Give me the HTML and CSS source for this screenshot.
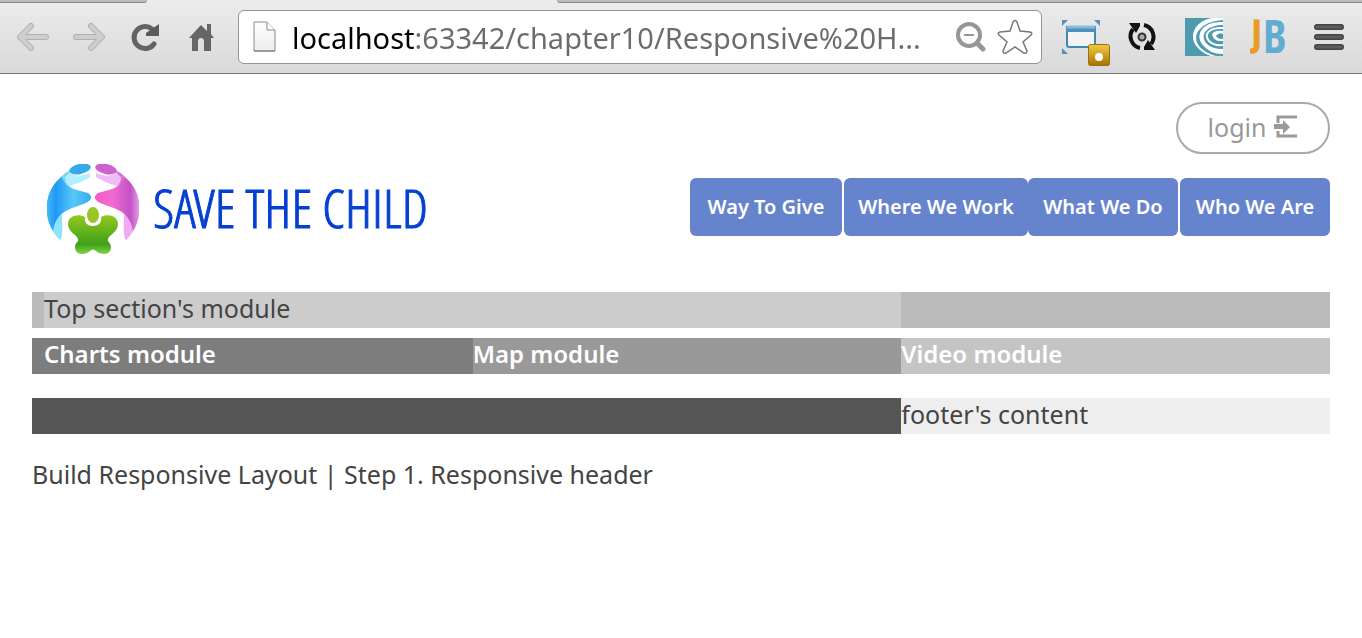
FILE: index.html
```html
<!DOCTYPE html>
<html lang="en">
<head>
<meta charset="utf-8">
<title>Save The Child</title>
<link rel="stylesheet" href="styles.css">
</head>
<body>
<div class="browser">
  <div class="tabs"><span class="tab-left"></span><span class="tab-active"></span><span class="tab-right"></span></div>
  <div class="toolbar">
    <div class="nav-tools">
      <button class="tool" aria-label="Back"><svg width="34" height="34" viewBox="0 0 34 34"><path d="M30 17H5M15 6L4 17L15 28" fill="none" stroke="#b0b0b0" stroke-width="6" stroke-linecap="round" stroke-linejoin="round"/><path d="M30 17H5M15 6L4 17L15 28" fill="none" stroke="#cecece" stroke-width="4" stroke-linecap="round" stroke-linejoin="round"/></svg></button>
      <button class="tool" aria-label="Forward"><svg width="34" height="34" viewBox="0 0 34 34"><path d="M4 17H29M19 6L30 17L19 28" fill="none" stroke="#b0b0b0" stroke-width="6" stroke-linecap="round" stroke-linejoin="round"/><path d="M4 17H29M19 6L30 17L19 28" fill="none" stroke="#cecece" stroke-width="4" stroke-linecap="round" stroke-linejoin="round"/></svg></button>
      <button class="tool" aria-label="Reload"><svg width="34" height="34" viewBox="0 0 34 34"><path d="M26 24A11 11 0 1 1 24 9" fill="none" stroke="#636363" stroke-width="5" stroke-linecap="round"/><path d="M31 4V16H18V13Z" fill="#5c5c5c"/></svg></button>
      <button class="tool" aria-label="Home"><svg width="34" height="34" viewBox="0 0 34 34"><path d="M5 18L17 5L23 11V4H27V14L30 18H27V31H20V22Q20 18 17 18T14 22V31H8V18Z" fill="#666"/></svg></button>
    </div>
    <div class="address">
      <svg class="page-icon" width="24" height="32" viewBox="0 0 24 32"><defs><linearGradient id="paper" x2="0" y2="1"><stop stop-color="#fff"/><stop offset="1" stop-color="#ececec"/></linearGradient></defs><path d="M1 1H14L22 9V30H1Z" fill="url(#paper)" stroke="#8a8a8a"/><path d="M14 1V9H22" fill="#fff" stroke="#8a8a8a"/><path d="M1 30H22" stroke="#777"/></svg>
      <input class="url" type="text" aria-label="Address" value="localhost:63342/chapter10/Responsive%20H...">
      <button class="tool" aria-label="Zoom"><svg width="32" height="32" viewBox="0 0 32 32" fill="none" stroke="#969696"><circle cx="14" cy="14" r="11" stroke-width="4"/><path d="M22 22L28 28" stroke-width="5" stroke-linecap="round"/><path d="M9 14H19" stroke-width="2"/></svg></button>
      <button class="tool" aria-label="Bookmark"><svg width="36" height="36" viewBox="0 0 36 36"><path d="M16 3Q18 0 20 3L23 12L33 13Q36 14 34 16L26 23L30 32Q30 35 27 34L18 28L9 34Q6 35 6 32L10 23L2 16Q0 14 3 13L13 12Z" fill="#fff" stroke="#777" stroke-width="1.5"/></svg></button>
    </div>
    <div class="extensions">
      <button class="tool resizer" aria-label="Window resizer"><svg width="50" height="58" viewBox="0 0 50 58"><defs><linearGradient id="gold" x2="0" y2="1"><stop stop-color="#f3cb43"/><stop offset="1" stop-color="#a77300"/></linearGradient></defs><path d="M1 12H7L1 18ZM39 12H33L39 18ZM1 46H7L1 40Z" fill="#4f94bd"/><rect x="6" y="19" width="28" height="20" rx="2" fill="#f4f4f4" stroke="#4188b5" stroke-width="2"/><path d="M5 18H35V24H5Z" fill="#4b91bd"/><path d="M6 19H34" stroke="#8bbbd8" stroke-width="3"/><rect x="27.500" y="36.500" width="21" height="21" rx="2" fill="url(#gold)" stroke="#967018"/><circle cx="38" cy="49" r="4" fill="#fff"/></svg></button>
      <button class="tool" aria-label="Auto refresh"><svg width="32" height="32" viewBox="0 0 32 32"><path d="M14 27A12 12 0 0 1 7 8M18 4A12 12 0 0 1 25 23" fill="none" stroke="#111" stroke-width="4"/><path d="M3 2H14V5L10 12ZM29 29H18V26L22 19Z" fill="#111"/><circle cx="16" cy="16" r="3.500" fill="#aaa" stroke="#333" stroke-width="2"/></svg></button>
      <button class="tool" aria-label="Swirl"><svg width="38" height="38" viewBox="0 0 38 38"><path d="M0 0H38V38H0Z" fill="#4c9bae"/><path d="M38 0H27C9 3 2 20 14 31Q19 36 26 38H31C13 33 7 21 14 12Q21 3 38 2Z" fill="#fff"/><path d="M38 4C18 3 10 16 17 26Q24 36 38 36V31Q26 31 21 25C14 15 24 7 38 7Z" fill="#fff"/><path d="M38 10C23 9 19 17 24 23Q29 28 38 27" fill="none" stroke="#fff" stroke-width="2"/><path d="M38 13Q30 12 27 16Q30 18 32 17Q35 14 38 16ZM27 16Q28 24 38 23V21Q31 21 31 17Z" fill="#fff"/></svg></button>
      <button class="tool" aria-label="JB"><svg width="36" height="66" viewBox="0 -14 36 66"><text class="jb j" x="2" y="28">J</text><text class="jb b" x="13" y="35">B</text></svg></button>
      <button class="tool" aria-label="Menu"><svg width="32" height="28" viewBox="0 0 32 28"><path d="M4 4H28M4 14H28M4 24H28" stroke="#444" stroke-width="6" stroke-linecap="round"/><path d="M4 4H28M4 14H28M4 24H28" stroke="#5c5c5c" stroke-width="3" stroke-linecap="round"/></svg></button>
    </div>
  </div>
</div>
<div class="page">
  <header class="header">
    <div class="account"><button class="login">login <svg width="24" height="24" viewBox="0 0 24 24"><path d="M23 2H4V8M4 16V21H23" fill="none" stroke="#999" stroke-width="3"/><path d="M0 9H9V5L16 12L9 19V14H0Z" fill="#999"/></svg></button></div>
    <div class="masthead">
      <a class="brand" href="#">
        <svg width="92" height="92" viewBox="0 0 92 92" aria-hidden="true">
          <defs>
            <linearGradient id="blue"><stop stop-color="#46baf6"/><stop offset=".2" stop-color="#2099f7"/><stop offset=".6" stop-color="#55c9f6"/><stop offset="1" stop-color="#37aaf3"/></linearGradient>
            <linearGradient id="pink"><stop stop-color="#f25cc8"/><stop offset=".4" stop-color="#f26ad0"/><stop offset=".8" stop-color="#c352c5"/><stop offset="1" stop-color="#e49ce9"/></linearGradient>
            <linearGradient id="green" x2="0" y2="1"><stop stop-color="#94c81f"/><stop offset=".75" stop-color="#40a018"/><stop offset="1" stop-color="#7ed64b"/></linearGradient>
          </defs>
          <path d="M16 13L22 8Q31 15 43 9V13Q36 18 22 22Z" fill="#b2efff"/>
          <path d="M76 13L70 8Q61 15 49 9V13Q56 18 70 22Z" fill="#efbdf5"/>
          <path d="M12 15Q-4 30 1 54Q4 68 13 76Q16 75 15 52Z" fill="#8fe2fc"/>
          <path d="M80 15Q96 30 91 54Q88 68 79 76Q76 75 77 52Z" fill="#efacf1"/>
          <path d="M15 12Q-5 29 1 56Q3 63 6 67C10 42 31 45 42 37Q47 33 41 29C32 26 19 26 15 12Z" fill="url(#blue)"/>
          <path d="M77 12Q97 29 91 56Q89 63 86 67C82 42 61 45 50 37Q45 33 51 29C60 26 73 26 77 12Z" fill="url(#pink)"/>
          <path d="M15 12Q19 8 24 6Q22 10 18 13Q18 18 22 22Q16 19 15 12Z" fill="#72d4f8"/>
          <path d="M77 12Q73 8 68 6Q70 10 74 13Q74 18 70 22Q76 19 77 12Z" fill="#d66fd5"/>
          <ellipse cx="33" cy="5" rx="11" ry="5" transform="rotate(-12 33 5)" fill="#36a9eb"/>
          <ellipse cx="59" cy="5" rx="11" ry="5" transform="rotate(12 59 5)" fill="#d062d0"/>
          <path d="M38 53C37 59 41 62 46 62S55 59 54 53C61 49 71 52 71 60C71 68 62 71 61 75C60 79 64 77 64 84C63 92 53 91 49 87Q46 84 43 87C39 91 29 92 28 84C28 77 32 79 31 75C30 71 21 68 21 60C21 52 31 49 38 53Z" fill="url(#green)"/>
          <ellipse cx="46" cy="51" rx="7" ry="9" fill="#9ac522" stroke="#fff" stroke-width="2"/>
        </svg>
        <span class="wordmark">SAVE THE CHILD</span>
      </a>
      <nav class="menu"><a class="menu-link spaced" href="#">Way To Give</a><a class="menu-link" href="#">Where We Work</a><a class="menu-link spaced" href="#">What We Do</a><a class="menu-link" href="#">Who We Are</a></nav>
    </div>
  </header>
  <main>
    <section class="row top"><div class="top-module">Top section's module</div></section>
    <section class="row modules"><div class="charts">Charts module</div><div class="map">Map module</div><div class="video">Video module</div></section>
  </main>
  <footer>
    <div class="row foot"><div class="foot-content">footer's content</div></div>
    <p class="caption">Build Responsive Layout | Step 1. Responsive header</p>
  </footer>
</div>
</body>
</html>
```
FILE: styles.css
```css
* { box-sizing: border-box; }
body { margin: 0; background: #fff; color: #444; font-family: "Noto Sans", sans-serif; font-size: 25px; line-height: 32px; }
a { text-decoration: none; }
button { font: inherit; }
.browser { border-bottom: 1px solid #777; background: linear-gradient(#ececec, #d9d9d9); }
.tabs { display: flex; height: 3px; }
.tab-left { flex: 0 0 147px; background: #bbb; border-bottom: 1px solid #888; border-bottom-right-radius: 3px; }
.tab-active { flex: 0 0 410px; }
.tab-right { flex: 1; background: #bbb; border-bottom: 1px solid #888; border-bottom-left-radius: 3px; }
.toolbar { display: flex; align-items: center; height: 70px; padding: 0 17px 2px 16px; }
.tool { display: flex; padding: 0; border: 0; background: none; flex: none; }
.nav-tools { display: flex; gap: 22px; width: 222px; }
.address { display: flex; align-items: center; flex: 1; min-width: 0; height: 54px; padding: 0 8px 0 14px; border: 1px solid #949494; border-radius: 6px; background: #fff; }
.page-icon { flex: none; }
.url { flex: 1; min-width: 0; margin-left: 15px; padding: 0; border: 0; font: 29px "Noto Sans", sans-serif; color: transparent; background: linear-gradient(90deg, #000 122px, #6b6b6b 122px); background-clip: text; -webkit-background-clip: text; }
.address .tool { margin-left: 10px; }
.extensions { display: flex; align-items: center; gap: 27px; margin-left: 19px; }
.resizer { margin-right: -12px; }
.jb { font-family: "Open Sans Condensed", "Roboto Condensed", sans-serif; font-weight: 700; }
.j { fill: #e99c25; stroke: #e99c25; font-size: 36px; }
.b { fill: #62acd0; font-size: 46px; }
.page { padding: 28px 32px; }
.account { display: flex; justify-content: flex-end; }
.login { display: flex; align-items: center; justify-content: center; gap: 8px; width: 154px; height: 52px; padding: 0 0 2px; border: 2px solid #aaa; border-radius: 26px; background: #fff; color: #999; }
.masthead { display: flex; justify-content: space-between; margin: 10px 0 36px; }
.brand { display: flex; align-items: center; gap: 14px; padding-left: 15px; color: #0540d2; }
.wordmark { font: 300 54px/84px "Open Sans Condensed Light", "Roboto Condensed", sans-serif; -webkit-text-stroke: 1px #0540d2; white-space: nowrap; padding-bottom: 6px; }
.menu { display: grid; grid-template-columns: 154fr 184fr 152fr 150fr; width: 640px; height: 58px; margin-top: 14px; flex: none; }
.menu-link { border-radius: 6px; background: #6684cd; color: #fff; text-align: center; font-size: 20px; font-weight: 600; line-height: 58px; }
.spaced { margin-right: 2px; }
.row { display: grid; grid-template-columns: repeat(3, 1fr); min-height: 36px; padding-left: 12px; }
.top { background: #bbb; margin-bottom: 10px; }
.top-module { grid-column: span 2; background: #ccc; }
.modules { background: #7d7d7d; color: #fff; font-size: 24px; font-weight: 600; margin-bottom: 24px; }
.map { background: #999; }
.video { background: #c4c4c4; }
.foot { background: #555; }
.foot-content { grid-column: 3; background: #eee; }
.caption { margin: 24px 0 0; }
```
